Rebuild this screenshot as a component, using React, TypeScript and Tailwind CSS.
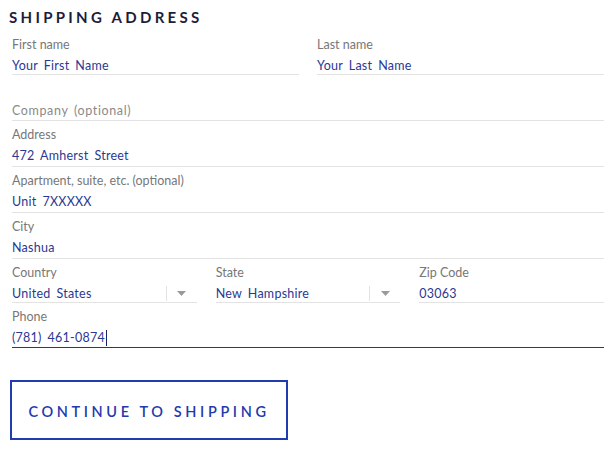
import React from "react";

const font = { fontFamily: "Lato, 'Open Sans', sans-serif" } as React.CSSProperties;

const valueCls = "text-[12.5px] leading-[18px] tracking-[0.02em] [word-spacing:2.5px] text-[#2b3893]";

function Field({ label, value, h = "h-[19px]" }: { label: string; value: string; h?: string }) {
  return (
    <div className="flex flex-col border-b border-[#e3e3e3] pt-[6px]">
      <div className="h-4 text-[12.5px] leading-4 text-[#777777]">{label}</div>
      <div className={`mt-[4px] ${h} ${valueCls}`}>{value}</div>
    </div>
  );
}

function SelectField({ label, value }: { label: string; value: string }) {
  return (
    <div className="flex flex-col border-b border-[#e3e3e3] pt-[6px]">
      <div className="h-4 text-[12.5px] leading-4 text-[#777777]">{label}</div>
      <div className="mt-[4px] flex h-[17px] items-center">
        <div className={`flex-1 ${valueCls}`}>{value}</div>
        <div className="h-[15px] w-px bg-[#e3e3e3]" />
        <div className="flex w-[30px] justify-center">
          <svg width="9" height="5" viewBox="0 0 9 5">
            <path d="M0 0 L9 0 L4.5 5 Z" fill="#9a9a9a" />
          </svg>
        </div>
      </div>
    </div>
  );
}

export default function App() {
  return (
    <div className="h-[459px] w-[614px] overflow-hidden bg-white" style={font}>
      <div className="px-[9px] pt-[7px]">
        <div className="h-[20px] text-[15px] font-bold leading-[20px] tracking-[0.22em] text-[#1c1d3a]">SHIPPING ADDRESS</div>
      </div>
      <div className="mt-[4px] flex flex-col pl-[12px] pr-[10px]">
        <div className="grid grid-cols-2 gap-[18px]">
          <Field label="First name" value="Your First Name" h="h-[17px]" />
          <Field label="Last name" value="Your Last Name" h="h-[17px]" />
        </div>
        <div className="flex flex-col border-b border-[#e3e3e3] pt-[26px]">
          <div className="h-[19px] text-[12.5px] leading-[19px] tracking-[0.05em] [word-spacing:2px] text-[#8a8a8a]">Company (optional)</div>
        </div>
        <Field label="Address" value="472 Amherst Street" />
        <Field label="Apartment, suite, etc. (optional)" value="Unit 7XXXXX" />
        <Field label="City" value="Nashua" />
        <div className="grid grid-cols-3 gap-[19px]">
          <SelectField label="Country" value="United States" />
          <SelectField label="State" value="New Hampshire" />
          <Field label="Zip Code" value="03063" h="h-[17px]" />
        </div>
        <div className="flex flex-col border-b border-[#26348a] pt-[6px]">
          <div className="h-4 text-[12.5px] leading-4 text-[#777777]">Phone</div>
          <div className="mt-[4px] flex h-[18px] items-start">
            <span className={valueCls}>(781) 461-0874</span>
            <span className="ml-[1px] mt-[1px] h-[16px] w-px bg-[#1c2466]" />
          </div>
        </div>
      </div>
      <div className="ml-[10px] mt-[32px] flex h-[60px] w-[278px] items-center justify-center border-2 border-[#1f3cb2] pt-[4px]">
        <span className="text-[14.5px] font-semibold tracking-[0.25em] text-[#2339ac]">CONTINUE TO SHIPPING</span>
      </div>
    </div>
  );
}
